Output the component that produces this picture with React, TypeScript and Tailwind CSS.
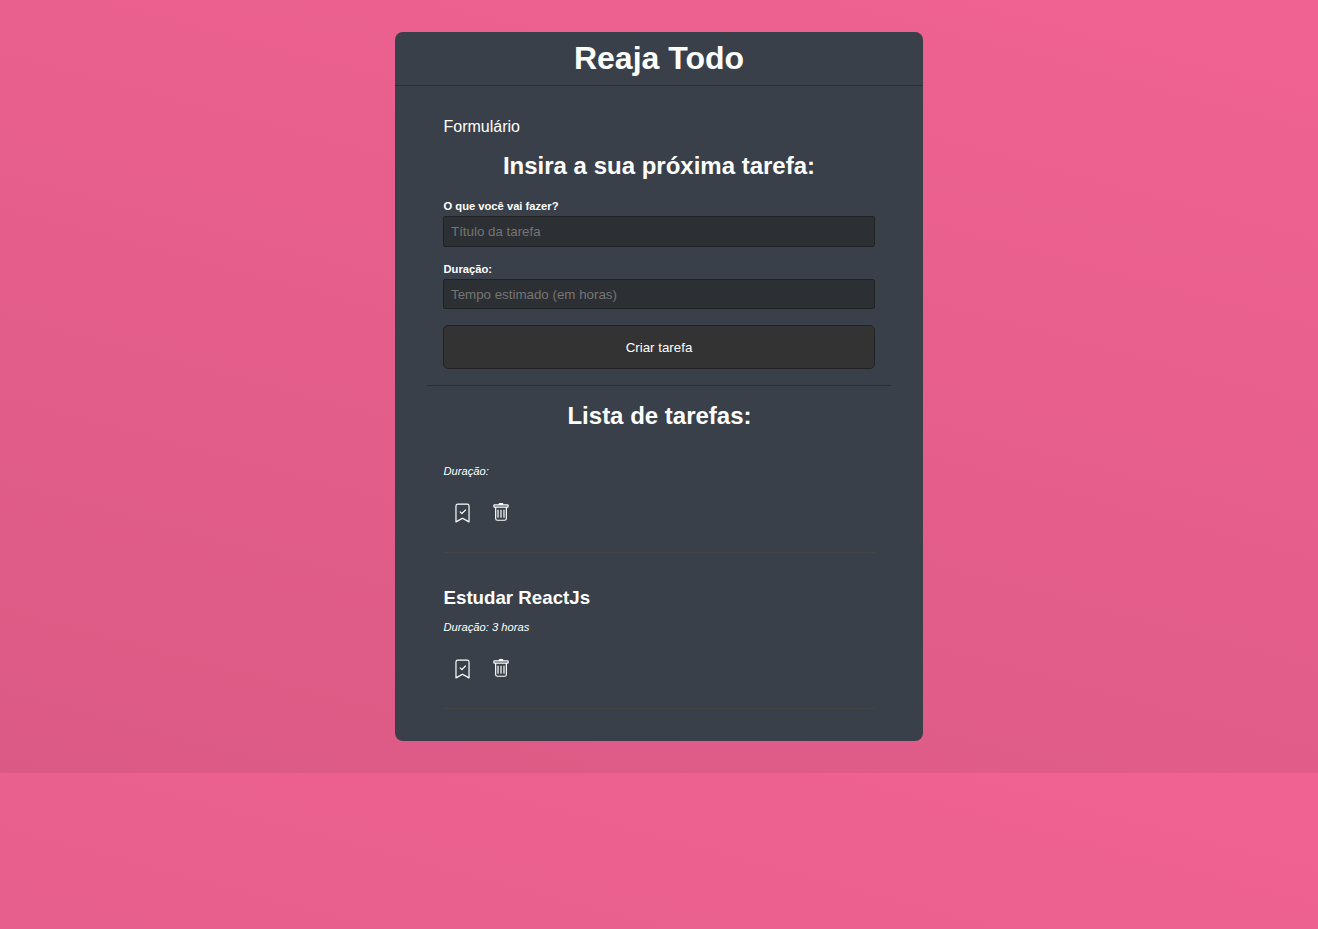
import { BsBookmarkCheck, BsTrash } from "react-icons/bs";

type Todo = { id: number; title: string; duration: string };

const todos: Todo[] = [
  { id: 1, title: "", duration: "" },
  { id: 2, title: "Estudar ReactJs", duration: "3 horas" },
];

function Field({ label, placeholder, className }: { label: string; placeholder: string; className: string }) {
  return (
    <label className="block">
      <span className="block h-4 pl-[0.5px] text-[11.2px] leading-[13px] font-bold">{label}</span>
      <input
        type="text"
        placeholder={placeholder}
        className={`block w-full rounded-[2px] border border-[#222] bg-[#2c2f33] px-[7px] text-[13.333px] text-white placeholder:text-[#757575] ${className}`}
      />
    </label>
  );
}

function TodoItem({ todo }: { todo: Todo }) {
  return (
    <article className="mx-4 flex h-[156px] flex-col border-b border-[#444] pt-[34px]">
      <h3 className="h-[22px] pl-[0.5px] text-[18.72px] leading-[22px] font-bold">{todo.title}</h3>
      <p className="mt-[12px] pl-[0.5px] text-[11.2px] leading-[13px] italic">Duração: {todo.duration}</p>
      <div className="mt-[25px] flex gap-[19px] pl-[10px]">
        <BsBookmarkCheck className="h-[20px] w-[19px]" />
        <BsTrash className="h-[19px] w-[20px]" />
      </div>
    </article>
  );
}

export default function App() {
  return (
    <div className="min-h-[929px] bg-[linear-gradient(15deg,#db5a85,#f06292)] bg-[length:100%_773px] pt-8 font-['Liberation_Sans',Arial,sans-serif] text-white">
      <main className="mx-auto h-[709px] w-[528px] rounded-lg bg-[#3a4049]">
        <header className="h-[54px] border-b border-[#2b2e37] pt-2 text-center">
          <h1 className="text-[32px] leading-[37px] font-bold">Reaja Todo</h1>
        </header>
        <section className="mx-8 h-[300px] border-b border-[#2b2e37] px-4 pt-8">
          <p className="pl-[0.5px] text-base leading-[18px]">Formulário</p>
          <h2 className="mt-4 mb-[21px] text-center text-2xl leading-[27px] font-bold">
            Insira a sua próxima tarefa:
          </h2>
          <form onSubmit={(e) => e.preventDefault()}>
            <Field label="O que você vai fazer?" placeholder="Título da tarefa" className="mb-4 h-[31px]" />
            <Field label="Duração:" placeholder="Tempo estimado (em horas)" className="mb-4 h-[30px]" />
            <button className="block h-[44px] w-full rounded-[5px] border border-[#222] bg-[#333] pt-px text-[13.333px]">
              Criar tarefa
            </button>
          </form>
        </section>
        <section className="mx-8 pt-4">
          <h2 className="pl-px text-center text-2xl leading-[27px] font-bold">Lista de tarefas:</h2>
          <div className="-mt-[32px]">
            {todos.map((todo) => (
              <TodoItem key={todo.id} todo={todo} />
            ))}
          </div>
        </section>
      </main>
    </div>
  );
}
